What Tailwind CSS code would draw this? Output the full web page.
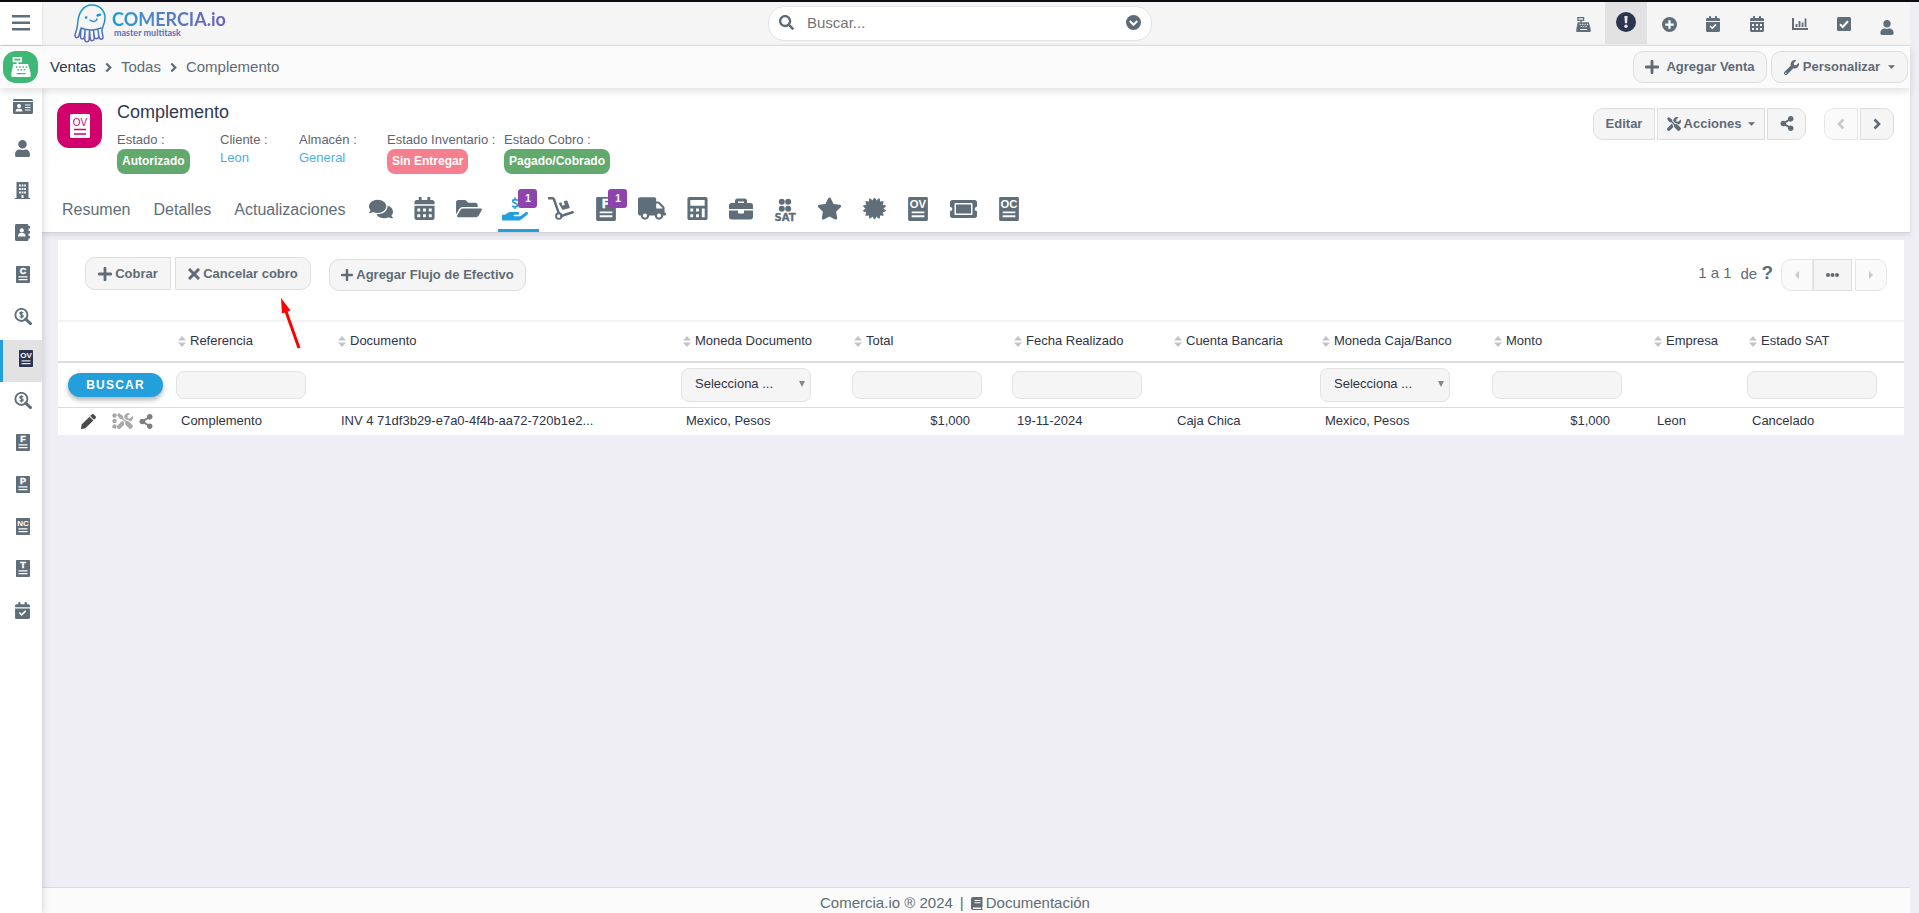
<!DOCTYPE html>
<html lang="es">
<head>
<meta charset="utf-8">
<title>Complemento - Ventas</title>
<script src="https://cdn.jsdelivr.net/npm/@tailwindcss/browser@4"></script>
</head>
<body class="bg-[#efeef4] font-['Liberation_Sans',Arial,sans-serif] text-[13px] leading-4 text-[#5f6b76]">

<svg class="hidden" aria-hidden="true">
  <symbol id="user" viewBox="0 0 448 512"><path d="M224 256c70.7 0 128-57.3 128-128S294.7 0 224 0 96 57.3 96 128s57.3 128 128 128zm89.6 32h-16.7c-22.2 10.2-46.9 16-72.9 16s-50.6-5.8-72.9-16h-16.7C60.2 288 0 348.2 0 422.4V464c0 26.5 21.5 48 48 48h352c26.5 0 48-21.5 48-48v-41.6c0-74.2-60.2-134.4-134.4-134.4z"/></symbol>
  <symbol id="search" viewBox="0 0 512 512"><path d="M505 442.7L405.3 343c-4.5-4.5-10.6-7-17-7H372c27.6-35.3 44-79.7 44-128C416 93.1 322.9 0 208 0S0 93.1 0 208s93.1 208 208 208c48.3 0 92.7-16.4 128-44v16.3c0 6.4 2.5 12.5 7 17l99.7 99.7c9.4 9.4 24.6 9.4 33.9 0l28.3-28.3c9.4-9.4 9.4-24.6.1-34zM208 336c-70.7 0-128-57.2-128-128 0-70.7 57.2-128 128-128 70.7 0 128 57.2 128 128 0 70.7-57.2 128-128 128z"/></symbol>
  <symbol id="star" viewBox="0 0 576 512"><path d="M259.3 17.8L194 150.2 47.9 171.5c-26.2 3.8-36.7 36.1-17.7 54.6l105.7 103-25 145.5c-4.5 26.3 23.2 46 46.4 33.7L288 439.6l130.7 68.7c23.2 12.2 50.9-7.4 46.4-33.7l-25-145.5 105.7-103c19-18.5 8.5-50.8-17.7-54.6L382 150.2 316.7 17.8c-11.7-23.6-45.6-23.9-57.4 0z"/></symbol>
  <symbol id="comments" viewBox="0 0 576 512"><path d="M416 192c0-88.4-93.1-160-208-160S0 103.6 0 192c0 34.3 14.1 65.9 38 92-13.4 30.2-35.5 54.2-35.8 54.5-2.2 2.3-2.8 5.7-1.5 8.7S4.8 352 8 352c36.6 0 66.9-12.3 88.7-25 32.2 15.7 70.3 25 111.3 25 114.9 0 208-71.6 208-160zm122 220c23.9-26 38-57.7 38-92 0-66.9-53.5-124.2-129.3-148.1.9 6.6 1.3 13.3 1.3 20.1 0 105.9-107.7 192-240 192-10.8 0-21.3-.8-31.7-1.9C207.8 439.6 281.8 480 368 480c41 0 79.1-9.2 111.3-25 21.8 12.7 52.1 25 88.7 25 3.2 0 6.1-1.9 7.3-4.8 1.3-2.9.7-6.3-1.5-8.7-.3-.3-22.4-24.2-35.8-54.5z"/></symbol>
  <symbol id="calendar" viewBox="0 0 448 512"><path fill-rule="evenodd" d="M0 464c0 26.500 21.500 48 48 48h352c26.500 0 48-21.500 48-48V192H0zM64 256h64v64H64zM192 256h64v64h-64zM320 256h64v64h-64zM64 384h64v64H64zM192 384h64v64h-64zM320 384h64v64h-64zM400 64h-48V16c0-8.800-7.200-16-16-16h-32c-8.800 0-16 7.200-16 16v48H160V16c0-8.800-7.200-16-16-16h-32c-8.800 0-16 7.200-16 16v48H48C21.500 64 0 85.500 0 112v48h448v-48c0-26.500-21.500-48-48-48z"/></symbol>
  <symbol id="calcheck" viewBox="0 0 448 512"><path fill-rule="evenodd" d="M0 464c0 26.500 21.500 48 48 48h352c26.500 0 48-21.500 48-48V192H0zM112 334l34-34 54 54 104-104 34 34-138 138zM400 64h-48V16c0-8.800-7.200-16-16-16h-32c-8.800 0-16 7.200-16 16v48H160V16c0-8.800-7.200-16-16-16h-32c-8.800 0-16 7.200-16 16v48H48C21.500 64 0 85.500 0 112v48h448v-48c0-26.500-21.500-48-48-48z"/></symbol>
  <symbol id="folder" viewBox="0 0 576 512"><path d="M572.7 292.100L500.300 416.200A64 64 0 0 1 445 448H45c-18.500 0-30-20-20.700-36l72.400-124.200A64 64 0 0 1 152 256h400c18.500 0 30 20 20.700 36.100zM152 224h328v-48c0-26.500-21.500-48-48-48H272l-64-64H48C21.500 64 0 85.500 0 112v278l69-118.400C86.200 242.200 118 224 152 224z"/></symbol>
  <symbol id="truck" viewBox="0 0 640 512"><path d="M624 352h-16V243.900c0-12.700-5.100-24.900-14.100-33.900L494 110.100c-9-9-21.200-14.100-33.900-14.100H416V48c0-26.500-21.500-48-48-48H48C21.500 0 0 21.500 0 48v320c0 26.500 21.500 48 48 48h16c0 53 43 96 96 96s96-43 96-96h128c0 53 43 96 96 96s96-43 96-96h48c8.800 0 16-7.200 16-16v-32c0-8.800-7.200-16-16-16zM160 464c-26.500 0-48-21.500-48-48s21.500-48 48-48 48 21.500 48 48-21.500 48-48 48zm320 0c-26.500 0-48-21.500-48-48s21.500-48 48-48 48 21.500 48 48-21.500 48-48 48zm80-208H416V144h44.100l99.900 99.900V256z"/></symbol>
  <symbol id="hand" viewBox="0 0 576 512"><path d="M565.300 328.100c-11.800-10.700-30.200-10-42.600 0L430.300 402c-11.300 9.100-25.400 14-40 14H272c-8.800 0-16-7.200-16-16s7.200-16 16-16h78.300c15.900 0 30.700-10.900 33.300-26.600 3.300-20-12.100-37.400-31.600-37.400H192c-27 0-53.100 9.300-74.100 26.300L71.400 384H16c-8.800 0-16 7.200-16 16v96c0 8.800 7.200 16 16 16h356.800c14.500 0 28.600-4.900 40-14L564 377c15.200-12.100 16.400-35.300 1.300-48.900z"/><path d="M350 68c-20-14-40-18-62-18-34 0-50 14-50 34 0 48 104 34 104 86 0 24-20 38-54 38-24 0-46-6-62-18M290 0v50M290 208v48" fill="none" stroke="currentColor" stroke-width="38"/></symbol>
  <symbol id="dolly" viewBox="0 0 576 512"><path d="M14 30h82c22 0 30 8 36 24l104 300M292 424l256-84" fill="none" stroke="currentColor" stroke-width="56" stroke-linecap="round"/><circle cx="240" cy="424" r="62" fill="none" stroke="currentColor" stroke-width="42"/><path d="M252 132l44-16 26 76 52-18-26-76 56-20c14-5 26 2 30 14l44 130c4 12-2 24-14 28L340 284c-12 4-24-2-28-14l-70-118c-2-10 0-16 10-20z"/></symbol>
  <symbol id="calc" viewBox="0 0 448 512"><path fill-rule="evenodd" d="M40 0h368c22 0 40 18 40 40v432c0 22-18 40-40 40H40c-22 0-40-18-40-40V40C0 18 18 0 40 0zM64 64v128h320V64zM64 256v64h64v-64zM192 256v64h64v-64zM64 384v64h64v-64zM192 384v64h64v-64zM320 256v192h64V256z"/></symbol>
  <symbol id="briefcase" viewBox="0 0 512 512"><path d="M320 336c0 8.800-7.200 16-16 16h-96c-8.800 0-16-7.200-16-16v-48H0v144c0 25.600 22.400 48 48 48h416c25.600 0 48-22.400 48-48V288H320v48zm144-208h-80V80c0-25.600-22.400-48-48-48H176c-25.600 0-48 22.400-48 48v48H48c-25.600 0-48 22.400-48 48v80h512v-80c0-25.600-22.400-48-48-48zm-144 0H192V96h128v32z"/></symbol>
  <symbol id="ticket" viewBox="0 0 576 512"><path d="M128 160h320v192H128V160zm400 96c0 26.500 21.500 48 48 48v96c0 26.500-21.500 48-48 48H48c-26.500 0-48-21.500-48-48v-96c26.500 0 48-21.500 48-48s-21.500-48-48-48v-96c0-26.500 21.500-48 48-48h480c26.500 0 48 21.500 48 48v96c-26.500 0-48 21.500-48 48zm-48-104c0-13.300-10.700-24-24-24H120c-13.300 0-24 10.700-24 24v208c0 13.300 10.700 24 24 24h336c13.300 0 24-10.700 24-24V152z"/></symbol>
  <symbol id="share" viewBox="0 0 448 512"><path d="M352 320c-22.600 0-43.400 7.800-59.800 20.900l-102.500-64a96.500 96.500 0 0 0 0-41.700l102.500-64C308.600 184.200 329.400 192 352 192c53 0 96-43 96-96S405 0 352 0s-96 43-96 96c0 7.200.8 14.100 2.300 20.800l-102.500 64.100C139.400 167.800 118.600 160 96 160c-53 0-96 43-96 96s43 96 96 96c22.600 0 43.400-7.800 59.800-20.900l102.500 64A96.300 96.300 0 0 0 256 416c0 53 43 96 96 96s96-43 96-96-43-96-96-96z"/></symbol>
  <symbol id="wrench" viewBox="0 0 512 512"><path d="M507.700 109.100c-2.200-9-13.500-12.100-20.100-5.500l-74.400 74.400-67.900-11.300L334 98.800l74.400-74.400c6.600-6.600 3.400-17.900-5.700-20.200-47.400-11.700-99.500.9-136.600 38-39.600 39.600-50.500 97-34 147.100L18.700 402.800c-25 25-25 65.500 0 90.500s65.500 25 90.500 0l213.200-213.200c50.100 16.700 107.500 5.700 147.400-34.200 37.100-37.100 49.700-89.400 37.900-136.800zM64 472c-13.300 0-24-10.700-24-24s10.700-24 24-24 24 10.700 24 24-10.700 24-24 24z"/></symbol>
  <symbol id="pencil" viewBox="0 0 512 512"><path d="M497.900 142.100l-46.100 46.100c-4.700 4.700-12.300 4.700-17 0l-111-111c-4.700-4.700-4.700-12.300 0-17l46.100-46.100c18.700-18.700 49.100-18.700 67.900 0l60.100 60.100c18.800 18.700 18.800 49.100 0 67.900zM284.200 99.800L21.600 362.400.4 483.900c-2.900 16.400 11.400 30.600 27.800 27.800l121.500-21.300 262.600-262.600c4.700-4.700 4.700-12.300 0-17l-111-111c-4.800-4.700-12.400-4.700-17.100 0z"/></symbol>
  <symbol id="tools" viewBox="0 0 512 512"><path d="M501.100 395.700L384 278.600c-23.100-23.100-57.600-27.600-85.400-13.900L192 158.100V96L64 0 0 64l96 128h62.100l106.600 106.600c-13.600 27.800-9.200 62.300 13.900 85.400l117.100 117.100c14.600 14.600 38.200 14.600 52.700 0l52.700-52.700c14.500-14.600 14.500-38.200 0-52.700zM331.700 225c28.300 0 54.900 11 74.900 31l19.400 19.400c15.800-6.900 30.800-16.500 43.800-29.500 37.100-37.100 49.700-89.300 37.900-136.700-2.200-9-13.500-12.100-20.100-5.500l-74.400 74.400-67.900-11.300L334 98.900l74.400-74.400c6.600-6.600 3.400-17.900-5.700-20.200-47.400-11.700-99.600.9-136.600 37.900-28.500 28.500-41.900 66.100-41.200 103.600l82.100 82.100c8.100-1.900 16.500-2.900 24.700-2.900zm-103.900 82l-56.700-56.700L18.700 402.800c-25 25-25 65.500 0 90.500s65.500 25 90.500 0l123.600-123.600c-7.600-19.900-9.900-41.600-5-62.700z"/></symbol>
  <symbol id="register" viewBox="0 0 16 16"><path fill-rule="evenodd" d="M1.300 0h7.500v4.200H6v1.300h7.700l2 7.500v2.300c0 .4-.3.700-.7.700H1c-.4 0-.7-.3-.7-.700V13l1.500-7.500h2.700V4.200H1.300zM2.700 1.400v1.400h4.700V1.400zM4 7.300v1.200h1.200V7.300zm2.600 0v1.200h1.200V7.300zm2.600 0v1.200h1.200V7.300zm2.500 0v1.200h1.200V7.300zM5.200 9.500v1.200h1.200V9.500zm2.500 0v1.200h1.200V9.500zm2.500 0v1.200h1.200V9.500zM4.500 12.800v1h7.200v-1z"/></symbol>
  <symbol id="plus" viewBox="0 0 14 14"><path d="M7 1.200v11.600M1.200 7h11.600" stroke="currentColor" stroke-width="2.800" stroke-linecap="round"/></symbol>
  <symbol id="times" viewBox="0 0 12 12"><path d="M2 2l8 8M10 2l-8 8" stroke="currentColor" stroke-width="3" stroke-linecap="square"/></symbol>
  <symbol id="chev" viewBox="0 0 8 12"><path d="M1.500 1.500L6 6l-4.500 4.500" fill="none" stroke="currentColor" stroke-width="2.600"/></symbol>
  <symbol id="sort" viewBox="0 0 8 11"><path d="M4 0l4 4.600H0zM4 11l4-4.600H0z" fill="#c3c3cb"/></symbol>
  <symbol id="moneysearch" viewBox="0 0 17 16"><circle cx="7" cy="6.500" r="5.700" fill="none" stroke="currentColor" stroke-width="1.800"/><path d="M11 10.500l4.600 4.200" stroke="currentColor" stroke-width="2.800" stroke-linecap="round"/><path d="M8.800 4.600c-1.500-.9-3.400-.6-3.300.5.1 1.400 3.200.9 3.200 2.400 0 1.300-2 1.400-3.500.5M7 3v7" fill="none" stroke="currentColor" stroke-width="1.200"/></symbol>
  <symbol id="doc" viewBox="0 0 14 17"><path fill-rule="evenodd" d="M1 0h12c.6 0 1 .4 1 1v15c0 .6-.4 1-1 1H1c-.6 0-1-.4-1-1V1c0-.6.4-1 1-1zM2.500 10.200v1.300h9v-1.300zM2.500 13v1.300h9V13z"/></symbol>
  <symbol id="cert" viewBox="0 0 24 24"><path d="M12 1l1.900 3L17 1.800l.5 3.500 3.600-.4-1.100 3.400 3.600 1-2.500 2.700 2.500 2.600-3.600 1 1.100 3.500-3.600-.4-.5 3.500-3.100-2.100-1.900 3-1.900-3L7 22.200l-.5-3.500-3.600.4L4 15.600l-3.600-1L2.900 12 .4 9.300l3.600-1-1.100-3.400 3.600.4L7 1.800 10.100 4z" stroke="currentColor"/></symbol>
</svg>

<div class="flex min-h-screen flex-col border-t-2 border-[#0d0b12] pr-[9px]">

  <!-- Barra superior -->
  <header class="flex h-11 border-b border-[#e0e0e0] bg-[#f5f5f5]">
    <button class="grid w-[42px] place-items-center bg-white pb-[2px] shadow-sm" aria-label="Menú">
      <svg class="h-4 w-[18px]" viewBox="0 0 18 16" fill="#606e7a"><path d="M0 0h18v2.500H0zM0 6.500h18V9H0zM0 13h18v2.500H0z"/></svg>
    </button>
    <div class="grid flex-1 grid-cols-[726fr_384px_758fr]">
      <a href="#" class="flex items-start gap-[5px] pt-[2px] pl-8" aria-label="Comercia.io">
        <svg class="h-[39px] w-[33px]" viewBox="0 0 33 39" fill="none" stroke="url(#lg)" stroke-width="1.500" stroke-linecap="round" stroke-linejoin="round">
          <defs><linearGradient id="lg" x1="0" y1="0" x2="0" y2="39" gradientUnits="userSpaceOnUse"><stop offset="0.200" stop-color="#139bd7"/><stop offset="1" stop-color="#6a5fb4"/></linearGradient></defs>
          <path d="M3.500 21C4 9 9 1 18 1c8 0 13 6 13 13 0 5-2.500 9-3 12-.5 3 1.500 6 1 8-.8 2-3.500 1.500-4-1l-1-7M3.500 21c-.3 5-2.700 8-2.500 11 .3 2.500 3.500 2 4-.5l1.500-6M7 24.500L6.500 33c.2 2.500 3.500 2.500 4 0l.5-8M11 25l-.3 10.500c.5 3 4 3 4.500 0l.3-9.500M15.500 26l.7 9c.8 2.500 4 2 4-.5l-.7-8.500M19.500 27l1 6.500c1 2 3.500 1.500 4-.5M7 24c6 2.500 14 2.500 20 0"/>
          <path d="M16 16c2.500 2.500 6 2 7-1"/><path d="M12 13.500h.3M23.500 11.500l2.500-.8" stroke-width="2.400"/>
        </svg>
        <span class="flex flex-col pt-[5px]">
          <span class="bg-linear-to-r from-[#139bd7] to-[#6a5fb4] bg-clip-text font-[Lato] text-[18px] leading-5 font-bold text-transparent">COMERCIA.io</span>
          <span class="pl-[2px] font-[Lato] text-[9px] leading-2 font-bold text-[#5a6fbd]">master multitask</span>
        </span>
      </a>
      <div class="mt-1 flex h-[35px] items-center rounded-2xl border border-[#e2e2e2] bg-white px-[10px] pb-[2px] text-[#5c6a77]">
        <svg class="size-[15px]" fill="currentColor"><use href="#search"/></svg>
        <input type="search" aria-label="Buscar" placeholder="Buscar..." class="ml-[13px] min-w-0 flex-1 bg-transparent text-[15px] leading-5 outline-none placeholder:text-[#757575]">
        <button aria-label="Opciones de búsqueda"><svg class="size-[15px]" viewBox="0 0 16 16"><circle cx="8" cy="8" r="8" fill="currentColor"/><path d="M4 6.500L8 10.500l4-4" fill="none" stroke="#fff" stroke-width="2.200"/></svg></button>
      </div>
      <nav class="ml-auto flex w-[348px] justify-between pr-[2px] text-[#606e7a]" aria-label="Accesos rápidos">
        <button class="grid h-[42px] w-[42px] place-items-center pt-[2px]" aria-label="Punto de venta"><svg class="size-[15px]" fill="currentColor"><use href="#register"/></svg></button>
        <button class="grid h-[42px] w-[42px] place-items-center bg-[#e2e2e2] pb-[2px] text-[#2c3550]" aria-label="Avisos"><svg class="size-5" viewBox="0 0 20 20"><circle cx="10" cy="10" r="10" fill="currentColor"/><path d="M8.400 4h3.200l-.5 7.200H8.900z" fill="#e8e8e8"/><circle cx="10" cy="14.300" r="1.700" fill="#e8e8e8"/></svg></button>
        <button class="grid h-[42px] w-[42px] place-items-center pt-[2px]" aria-label="Agregar"><svg class="size-[15px]" viewBox="0 0 16 16"><circle cx="8" cy="8" r="8" fill="currentColor"/><path d="M8 3.500v9M3.500 8h9" stroke="#fff" stroke-width="2.400"/></svg></button>
        <button class="grid h-[42px] w-[42px] place-items-center pt-[2px]" aria-label="Tareas"><svg class="h-4 w-[14px]" fill="currentColor"><use href="#calcheck"/></svg></button>
        <button class="grid h-[42px] w-[42px] place-items-center pt-[2px]" aria-label="Calendario"><svg class="h-4 w-[14px]" fill="currentColor"><use href="#calendar"/></svg></button>
        <button class="grid h-[42px] w-[42px] place-items-center pt-[2px]" aria-label="Reportes"><svg class="h-3 w-4" viewBox="0 0 16 12"><path d="M1 0v11h15" fill="none" stroke="currentColor" stroke-width="2"/><path d="M4.500 6v3M7.500 3v6M10.500 4.500V9M13.500.5V9" stroke="currentColor" stroke-width="1.800"/></svg></button>
        <button class="grid h-[42px] w-[42px] place-items-center pt-[2px]" aria-label="Pendientes"><svg class="size-[14px]" viewBox="0 0 14 14"><rect width="14" height="14" rx="1.500" fill="currentColor"/><path d="M3 7.300L5.700 10 11 4.300" fill="none" stroke="#fff" stroke-width="2"/></svg></button>
        <button class="grid h-[42px] w-[42px] place-items-center pt-2" aria-label="Usuario"><svg class="h-[15px] w-[14px]" fill="currentColor"><use href="#user"/></svg></button>
      </nav>
    </div>
  </header>

  <!-- Ruta de navegación -->
  <div class="relative z-10 flex h-[42px] items-center bg-[#fbfbfb] pr-[2px] pl-[3px] shadow-[0_3px_8px_rgba(0,0,0,0.13)]">
    <a href="#" class="grid h-8 w-[35px] place-items-center rounded-[13px] bg-[#3fb876] text-white" aria-label="Punto de venta"><svg class="size-5" fill="currentColor"><use href="#register"/></svg></a>
    <nav class="ml-3 flex items-center gap-[9px] text-[15px] leading-5" aria-label="Ruta">
      <a href="#" class="text-[#2b3445]">Ventas</a>
      <svg class="h-[11px] w-[7px]"><use href="#chev"/></svg>
      <a href="#">Todas</a>
      <svg class="h-[11px] w-[7px]"><use href="#chev"/></svg>
      <a href="#">Complemento</a>
    </nav>
    <div class="ml-auto flex gap-1 font-bold">
      <button class="flex h-8 w-[134px] items-center justify-center gap-[7px] rounded-[10px] border border-[#dedede] bg-[#f5f5f5]"><svg class="size-[14px]"><use href="#plus"/></svg>Agregar Venta</button>
      <button class="flex h-8 w-[137px] items-center justify-center gap-1 rounded-[10px] border border-[#dedede] bg-[#f5f5f5]"><svg class="size-[15px]" fill="currentColor"><use href="#wrench"/></svg>Personalizar<svg class="ml-1 h-1 w-[7px]" viewBox="0 0 8 4" fill="currentColor"><path d="M0 0h8L4 4z"/></svg></button>
    </div>
  </div>

  <div class="flex flex-1">
    <!-- Menú lateral -->
    <nav class="z-[1] w-[42px] bg-white text-[#606e7a] shadow-[2px_0_6px_rgba(0,0,0,0.12)]" aria-label="Módulos">
      <a href="#" aria-label="Prospectos" class="grid h-[42px] place-items-center pb-[6px] pl-[3px]"><svg class="h-[15px] w-5" viewBox="0 0 20 15"><path fill="currentColor" fill-rule="evenodd" d="M1.500 0h17c.8 0 1.500.7 1.500 1.500V2H0v-.5C0 .7.700 0 1.500 0zM0 3h20v10.500c0 .8-.7 1.500-1.500 1.500h-17C.7 15 0 14.300 0 13.500zM6 5a2 2 0 1 0 0 4 2 2 0 0 0 0-4zM2.500 12.500h7c0-1.500-1-2.800-2.300-2.800H4.800c-1.300 0-2.300 1.300-2.300 2.800zM12 5.500v1h5.500v-1zM12 8v1h5.500V8zM12 10.500v1h5.500v-1z"/></svg></a>
      <a href="#" aria-label="Clientes" class="grid h-[42px] place-items-center pb-[6px] pl-[3px]"><svg class="h-[17px] w-[15px]" fill="currentColor"><use href="#user"/></svg></a>
      <a href="#" aria-label="Empresas" class="grid h-[42px] place-items-center pb-[6px] pl-[3px]"><svg class="h-[17px] w-[15px]" viewBox="0 0 15 17"><path fill="currentColor" fill-rule="evenodd" d="M1.500 0h12v16H15v1H0v-1h1.500zM4 2.500v2h1.800v-2zm2.600 0v2h1.800v-2zm2.600 0v2H11v-2zM4 6v2h1.800V6zm2.600 0v2h1.800V6zm2.600 0v2H11V6zM4 9.500v2h1.800v-2zm2.600 0v2h1.800v-2zm2.600 0v2H11v-2zM6.500 13v3h2v-3z"/></svg></a>
      <a href="#" aria-label="Contactos" class="grid h-[42px] place-items-center pb-[6px] pl-[3px]"><svg class="h-[17px] w-[15px]" viewBox="0 0 15 17"><path fill="currentColor" fill-rule="evenodd" d="M1.500 0h10.500c.8 0 1.500.7 1.500 1.500V2H15v2.500h-1.500V7H15v2.500h-1.500V12H15v2.500h-1.500v1c0 .8-.7 1.500-1.500 1.500H1.500C.7 17 0 16.300 0 15.500v-14C0 .7.700 0 1.500 0zM6.800 4.300a2.100 2.100 0 1 0 0 4.200 2.100 2.100 0 0 0 0-4.200zM3 12.500h7.600c0-2-1.100-3.500-2.600-3.500H5.600C4.100 9 3 10.500 3 12.500z"/></svg></a>
      <a href="#" aria-label="Cotizaciones" class="grid h-[42px] place-items-center pb-[6px] pl-[3px]"><svg class="h-[17px] w-[14px]" viewBox="0 0 14 17"><use href="#doc" fill="currentColor"/><text x="7" y="8" text-anchor="middle" fill="#fff" stroke="#fff" stroke-width=".4" font-size="9" font-weight="700">C</text></svg></a>
      <a href="#" aria-label="Buscar cotización" class="grid h-[42px] place-items-center pb-[6px] pl-[3px]"><svg class="h-[17px] w-[18px]"><use href="#moneysearch"/></svg></a>
      <a href="#" aria-label="Órdenes de venta" aria-current="page" class="grid h-[42px] place-items-center border-l-[3px] border-[#23a0dc] bg-[#e2e2e2] pb-[6px] pl-[6px] text-[#2c3550]"><svg class="h-[17px] w-[14px]" viewBox="0 0 14 17"><use href="#doc" fill="currentColor"/><text x="7" y="8" text-anchor="middle" fill="#fff" font-size="8" font-weight="700">OV</text></svg></a>
      <a href="#" aria-label="Buscar venta" class="grid h-[42px] place-items-center pb-[6px] pl-[3px]"><svg class="h-[17px] w-[18px]"><use href="#moneysearch"/></svg></a>
      <a href="#" aria-label="Facturas" class="grid h-[42px] place-items-center pb-[6px] pl-[3px]"><svg class="h-[17px] w-[14px]" viewBox="0 0 14 17"><use href="#doc" fill="currentColor"/><text x="7" y="8" text-anchor="middle" fill="#fff" stroke="#fff" stroke-width=".4" font-size="9" font-weight="700">F</text></svg></a>
      <a href="#" aria-label="Pagos" class="grid h-[42px] place-items-center pb-[6px] pl-[3px]"><svg class="h-[17px] w-[14px]" viewBox="0 0 14 17"><use href="#doc" fill="currentColor"/><text x="7" y="8" text-anchor="middle" fill="#fff" stroke="#fff" stroke-width=".4" font-size="9" font-weight="700">P</text></svg></a>
      <a href="#" aria-label="Notas de crédito" class="grid h-[42px] place-items-center pb-[6px] pl-[3px]"><svg class="h-[17px] w-[14px]" viewBox="0 0 14 17"><use href="#doc" fill="currentColor"/><text x="7" y="8" text-anchor="middle" fill="#fff" font-size="8" font-weight="700">NC</text></svg></a>
      <a href="#" aria-label="Traslados" class="grid h-[42px] place-items-center pb-[6px] pl-[3px]"><svg class="h-[17px] w-[14px]" viewBox="0 0 14 17"><use href="#doc" fill="currentColor"/><text x="7" y="8" text-anchor="middle" fill="#fff" stroke="#fff" stroke-width=".4" font-size="9" font-weight="700">T</text></svg></a>
      <a href="#" aria-label="Actividades" class="grid h-[42px] place-items-center pb-[6px] pl-[3px]"><svg class="h-[17px] w-[15px]" fill="currentColor"><use href="#calcheck"/></svg></a>
    </nav>

    <div class="flex min-w-0 flex-1 flex-col">
      <!-- Encabezado del registro -->
      <section class="border-b border-[#d4d4da] bg-white shadow-[0_2px_5px_rgba(0,0,0,0.1)]">
        <div class="flex h-[97px] items-start pt-[15px] pr-4 pl-[15px]">
          <div class="grid size-[45px] place-items-center rounded-xl bg-[#d1006c]"><svg class="h-6 w-5" viewBox="0 0 20 24"><rect width="20" height="24" rx="1.500" fill="#fff"/><text x="10" y="11.500" text-anchor="middle" fill="#d1006c" font-size="10">OV</text><path d="M4 15.500h12M4 20h12" stroke="#d1006c" stroke-width="1.500"/></svg></div>
          <div class="ml-[15px]">
            <h1 class="text-[18px] leading-[18px] text-[#2f3a52]">Complemento</h1>
            <dl class="mt-[11px] grid grid-cols-[103px_79px_88px_117px_auto] text-[#5f6470]">
              <div><dt>Estado :</dt><dd class="mt-px inline-block rounded-lg bg-[#61a96c] px-[5px] py-[4px] text-[12px] leading-[17px] font-bold text-white">Autorizado</dd></div>
              <div><dt>Cliente :</dt><dd><a href="#" class="mt-[2px] block text-[#4bafde]">Leon</a></dd></div>
              <div><dt>Almacén :</dt><dd><a href="#" class="mt-[2px] block text-[#4bafde]">General</a></dd></div>
              <div><dt>Estado Inventario :</dt><dd class="mt-px inline-block rounded-lg bg-[#f57f8e] px-[5px] py-[4px] text-[12px] leading-[17px] font-bold text-white">Sin Entregar</dd></div>
              <div><dt>Estado Cobro :</dt><dd class="mt-px inline-block rounded-lg bg-[#61a96c] px-[5px] py-[4px] text-[12px] leading-[17px] font-bold text-white">Pagado/Cobrado</dd></div>
            </dl>
          </div>
          <div class="mt-[5px] ml-auto flex gap-[2px] font-bold">
            <button class="h-8 w-[62px] rounded-l-[10px] border border-[#dedede] bg-[#f5f5f5]">Editar</button>
            <button class="flex h-8 w-[108px] items-center justify-center gap-[3px] border border-[#dedede] bg-[#f5f5f5]"><svg class="size-[14px]" fill="currentColor"><use href="#tools"/></svg>Acciones<svg class="ml-1 h-1 w-[7px]" viewBox="0 0 8 4" fill="currentColor"><path d="M0 0h8L4 4z"/></svg></button>
            <button class="grid h-8 w-[39px] place-items-center rounded-r-[10px] border border-[#dedede] bg-[#f5f5f5] pb-[2px]" aria-label="Compartir"><svg class="h-[15px] w-[14px]" fill="currentColor"><use href="#share"/></svg></button>
            <button disabled class="ml-4 grid h-8 w-[34px] place-items-center rounded-l-[10px] border border-[#e6e6e6] bg-[#fafafa] text-[#c5cacf]" aria-label="Anterior"><svg class="h-3 w-2 rotate-180"><use href="#chev"/></svg></button>
            <button class="grid h-8 w-[34px] place-items-center rounded-r-[10px] border border-[#dedede] bg-[#f5f5f5]" aria-label="Siguiente"><svg class="h-3 w-2"><use href="#chev"/></svg></button>
          </div>
        </div>
        <nav class="flex h-[47px] gap-px pl-[9px] text-[16px] leading-5 text-[#606e7a]" aria-label="Secciones">
          <a href="#" class="flex items-center px-[11px] pt-[2px]">Resumen</a>
          <a href="#" class="flex items-center px-[11px] pt-[2px]">Detalles</a>
          <a href="#" class="flex items-center px-[11px] pt-[2px]">Actualizaciones</a>
          <a href="#" aria-label="Comentarios" class="ml-[2px] flex items-center px-[10px] pt-px"><svg class="h-[22px] w-[24px]" fill="currentColor"><use href="#comments"/></svg></a>
          <a href="#" aria-label="Calendario" class="flex items-center px-[10px]"><svg class="h-[23px] w-[21px]" fill="currentColor"><use href="#calendar"/></svg></a>
          <a href="#" aria-label="Documentos" class="flex items-center px-[10px]"><svg class="h-[23px] w-[26px]" fill="currentColor"><use href="#folder"/></svg></a>
          <a href="#" aria-label="Cobros" aria-current="page" class="relative flex items-center px-[9px] text-[#23a0dc]"><svg class="h-[24px] w-[26px]" fill="currentColor"><use href="#hand"/></svg><span class="absolute top-1 right-0 grid size-[19px] place-items-center rounded-[3px] bg-[#8e44ad] text-[10px] leading-3 font-bold text-white">1</span><span class="absolute -right-[2px] bottom-0 left-[5px] h-[3px] bg-[#23a0dc]"></span></a>
          <a href="#" aria-label="Entregas" class="flex items-center px-[10px]"><svg class="h-[23px] w-[26px]" fill="currentColor"><use href="#dolly"/></svg></a>
          <a href="#" aria-label="Facturas" class="relative flex items-center px-[10px] pt-px"><svg class="h-[24px] w-[22px]" viewBox="0 0 14 17"><use href="#doc" fill="currentColor"/><text x="7" y="8" text-anchor="middle" fill="#fff" stroke="#fff" stroke-width=".4" font-size="9" font-weight="700">F</text></svg><span class="absolute top-1 right-0 grid size-[19px] place-items-center rounded-[3px] bg-[#8e44ad] text-[10px] leading-3 font-bold text-white">1</span></a>
          <a href="#" aria-label="Envíos" class="flex items-center px-[10px]"><svg class="h-[23px] w-[28px]" fill="currentColor"><use href="#truck"/></svg></a>
          <a href="#" aria-label="Contabilidad" class="flex items-center px-[10px]"><svg class="h-[23px] w-[21px]" fill="currentColor"><use href="#calc"/></svg></a>
          <a href="#" aria-label="Proyectos" class="flex items-center px-[10px]"><svg class="size-[24px]" fill="currentColor"><use href="#briefcase"/></svg></a>
          <a href="#" aria-label="SAT" class="flex items-center px-[9px] pt-[3px]"><svg class="h-[24px] w-[24px]" viewBox="0 0 24 24" fill="currentColor"><circle cx="8.800" cy="3.800" r="3"/><circle cx="15.200" cy="3.800" r="3"/><circle cx="8.800" cy="10.800" r="3"/><circle cx="15.200" cy="10.800" r="3"/><text x="12" y="23" text-anchor="middle" font-family="DejaVu Sans" font-size="10" font-weight="700" stroke="currentColor" stroke-width=".3">SAT</text></svg></a>
          <a href="#" aria-label="Favoritos" class="flex items-center px-[10px]"><svg class="h-[23px] w-[25px]" fill="currentColor"><use href="#star"/></svg></a>
          <a href="#" aria-label="Certificados" class="flex items-center px-[10px]"><svg class="h-[23px] w-[23px]" fill="currentColor"><use href="#cert"/></svg></a>
          <a href="#" aria-label="Órdenes de venta" class="flex items-center px-[10px] pt-px"><svg class="h-[24px] w-[22px]" viewBox="0 0 14 17"><use href="#doc" fill="currentColor"/><text x="7" y="8" text-anchor="middle" fill="#fff" font-size="8" font-weight="700">OV</text></svg></a>
          <a href="#" aria-label="Boletos" class="flex items-center px-[10px]"><svg class="h-[24px] w-[27px]" fill="currentColor"><use href="#ticket"/></svg></a>
          <a href="#" aria-label="Órdenes de compra" class="flex items-center px-[10px] pt-px"><svg class="h-[24px] w-[22px]" viewBox="0 0 14 17"><use href="#doc" fill="currentColor"/><text x="7" y="8" text-anchor="middle" fill="#fff" font-size="8" font-weight="700">OC</text></svg></a>
        </nav>
      </section>

      <!-- Lista de cobros -->
      <main class="mt-[7px] mr-[6px] ml-4 flex-1">
        <div class="relative bg-white">
          <div class="flex h-20 items-start pt-[17px] pr-[17px] pl-[27px] font-bold">
            <button class="flex h-[33px] w-[86px] items-center justify-center gap-[3px] rounded-l-[10px] border border-[#dedede] bg-[#f5f5f5]"><svg class="size-[14px]"><use href="#plus"/></svg>Cobrar</button>
            <button class="ml-1 flex h-[33px] w-[136px] items-center justify-center gap-[3px] rounded-r-[10px] border border-[#dedede] bg-[#f5f5f5]"><svg class="size-3"><use href="#times"/></svg>Cancelar cobro</button>
            <button class="mt-[2px] ml-[18px] flex h-8 w-[197px] items-center justify-center gap-[3px] rounded-[10px] border border-[#dedede] bg-[#f5f5f5]"><svg class="size-3"><use href="#plus"/></svg>Agregar Flujo de Efectivo</button>
            <div class="mt-[6px] ml-auto flex gap-[9px] text-[15px] leading-5 font-normal"><span>1 a 1</span><span>de <b class="text-[19px]">?</b></span></div>
            <div class="mt-[2px] ml-2 flex">
              <button disabled class="grid h-8 w-8 place-items-center rounded-l-[10px] border border-[#e6e6e6] bg-[#fafafa]" aria-label="Página anterior"><svg class="h-2 w-1" viewBox="0 0 4 8" fill="#c5cacf"><path d="M4 0v8L0 4z"/></svg></button>
              <button class="grid h-8 w-[39px] place-items-center border border-[#dedede] bg-[#f5f5f5]" aria-label="Ir a página"><svg class="h-1 w-[13px]" viewBox="0 0 13 4" fill="currentColor"><circle cx="2" cy="2" r="2"/><circle cx="6.500" cy="2" r="2"/><circle cx="11" cy="2" r="2"/></svg></button>
              <button disabled class="ml-[3px] grid h-8 w-8 place-items-center rounded-r-[10px] border border-[#e6e6e6] bg-[#fafafa]" aria-label="Página siguiente"><svg class="h-2 w-1" viewBox="0 0 4 8" fill="#c5cacf"><path d="M0 0v8l4-4z"/></svg></button>
            </div>
          </div>

          <table class="w-full table-fixed border-collapse text-left text-[#2f3347]">
            <colgroup><col class="w-[118px]"><col class="w-[160px]"><col><col class="w-[171px]"><col class="w-[160px]"><col class="w-[160px]"><col class="w-[148px]"><col class="w-[172px]"><col class="w-[160px]"><col class="w-[95px]"><col class="w-[157px]"></colgroup>
            <thead>
              <tr class="h-[41px] border-t-2 border-b-2 border-t-[#f3f3f3] border-b-[#dcdcdc]">
                <td></td>
                <th class="pb-px pl-[2px] font-normal"><span class="flex items-center gap-1"><svg class="h-[11px] w-2"><use href="#sort"/></svg>Referencia</span></th>
                <th class="pb-px pl-[2px] font-normal"><span class="flex items-center gap-1"><svg class="h-[11px] w-2"><use href="#sort"/></svg>Documento</span></th>
                <th class="pb-px pl-[2px] font-normal"><span class="flex items-center gap-1"><svg class="h-[11px] w-2"><use href="#sort"/></svg>Moneda Documento</span></th>
                <th class="pb-px pl-[2px] font-normal"><span class="flex items-center gap-1"><svg class="h-[11px] w-2"><use href="#sort"/></svg>Total</span></th>
                <th class="pb-px pl-[2px] font-normal"><span class="flex items-center gap-1"><svg class="h-[11px] w-2"><use href="#sort"/></svg>Fecha Realizado</span></th>
                <th class="pb-px pl-[2px] font-normal"><span class="flex items-center gap-1"><svg class="h-[11px] w-2"><use href="#sort"/></svg>Cuenta Bancaria</span></th>
                <th class="pb-px pl-[2px] font-normal"><span class="flex items-center gap-1"><svg class="h-[11px] w-2"><use href="#sort"/></svg>Moneda Caja/Banco</span></th>
                <th class="pb-px pl-[2px] font-normal"><span class="flex items-center gap-1"><svg class="h-[11px] w-2"><use href="#sort"/></svg>Monto</span></th>
                <th class="pb-px pl-[2px] font-normal"><span class="flex items-center gap-1"><svg class="h-[11px] w-2"><use href="#sort"/></svg>Empresa</span></th>
                <th class="pb-px pl-[2px] font-normal"><span class="flex items-center gap-1"><svg class="h-[11px] w-2"><use href="#sort"/></svg>Estado SAT</span></th>
              </tr>
            </thead>
            <tbody>
              <tr class="h-[45px] border-b border-[#dcdcdc]">
                <td class="pl-[10px]"><button class="block h-6 w-[95px] rounded-full bg-[#23a0dc] text-[12px] leading-4 font-bold tracking-widest text-white shadow-[0_3px_5px_rgba(0,0,0,0.3)]">BUSCAR</button></td>
                <td><input aria-label="Referencia" class="block h-7 w-[130px] rounded-lg border border-[#e3e3e3] bg-[#f5f5f5] px-2"></td>
                <td></td>
                <td><span class="relative block w-[130px]"><select aria-label="Moneda Documento" class="block h-[34px] w-full appearance-none rounded-lg border border-[#e3e3e3] bg-[#f5f5f5] pb-[2px] pl-[13px]"><option>Selecciona ...</option></select><svg class="pointer-events-none absolute top-[13px] right-[6px] h-[6px] w-[6px]" viewBox="0 0 6 6" fill="#888"><path d="M0 0h6L3 6z"/></svg></span></td>
                <td><input aria-label="Total" class="block h-7 w-[130px] rounded-lg border border-[#e3e3e3] bg-[#f5f5f5] px-2"></td>
                <td><input aria-label="Fecha Realizado" class="block h-7 w-[130px] rounded-lg border border-[#e3e3e3] bg-[#f5f5f5] px-2"></td>
                <td></td>
                <td><span class="relative block w-[130px]"><select aria-label="Moneda Caja/Banco" class="block h-[34px] w-full appearance-none rounded-lg border border-[#e3e3e3] bg-[#f5f5f5] pb-[2px] pl-[13px]"><option>Selecciona ...</option></select><svg class="pointer-events-none absolute top-[13px] right-[6px] h-[6px] w-[6px]" viewBox="0 0 6 6" fill="#888"><path d="M0 0h6L3 6z"/></svg></span></td>
                <td><input aria-label="Monto" class="block h-7 w-[130px] rounded-lg border border-[#e3e3e3] bg-[#f5f5f5] px-2"></td>
                <td></td>
                <td><input aria-label="Estado SAT" class="block h-7 w-[130px] rounded-lg border border-[#e3e3e3] bg-[#f5f5f5] px-2"></td>
              </tr>
              <tr class="h-7">
                <td class="pl-[23px]"><span class="flex items-center">
                  <button aria-label="Editar" class="text-[#4a4a4a]"><svg class="size-[15px]" fill="currentColor"><use href="#pencil"/></svg></button>
                  <button aria-label="Acciones" class="ml-4 flex items-center text-[#a9a9a9]"><svg class="h-4 w-[5px]" viewBox="0 0 5 16" fill="currentColor"><circle cx="2.500" cy="2.500" r="2.200"/><circle cx="2.500" cy="8" r="2.200"/><circle cx="2.500" cy="13.500" r="2.200"/></svg><svg class="size-4" fill="currentColor"><use href="#tools"/></svg></button>
                  <button aria-label="Compartir" class="ml-[6px] text-[#7d7d7d]"><svg class="h-[15px] w-[14px]" fill="currentColor"><use href="#share"/></svg></button></span></td>
                <td class="pl-[5px]">Complemento</td>
                <td class="pl-[5px]">INV 4 71df3b29-e7a0-4f4b-aa72-720b1e2...</td>
                <td class="pl-[5px]">Mexico, Pesos</td>
                <td class="pr-[42px] text-right">$1,000</td>
                <td class="pl-[5px]">19-11-2024</td>
                <td class="pl-[5px]">Caja Chica</td>
                <td class="pl-[5px]">Mexico, Pesos</td>
                <td class="pr-[42px] text-right">$1,000</td>
                <td class="pl-[5px]">Leon</td>
                <td class="pl-[5px]">Cancelado</td>
              </tr>
            </tbody>
          </table>

          <!-- Flecha de anotación -->
          <svg class="pointer-events-none absolute top-[58px] left-[223px] h-[52px] w-5" viewBox="0 0 20 52"><path d="M4.500 12L18 50" stroke="#f00" stroke-width="3"/><path d="M0 0l9.500 12.500L1 15.500z" fill="#f00"/></svg>
        </div>
      </main>

      <footer class="flex h-[26px] items-center justify-center gap-[7px] border-t border-[#dcdce0] bg-[#fbfbfb] pt-[5px] pr-[42px] text-[15px] leading-5">
        <span>Comercia.io ® 2024</span><span>|</span>
        <a href="#" class="flex items-center gap-[3px]"><svg class="h-[13px] w-3" viewBox="0 0 12 13"><path fill="currentColor" fill-rule="evenodd" d="M2 0h9.500v10.500H11V12h.5v1H2a2 2 0 0 1-2-2V2a2 2 0 0 1 2-2zM3.500 3v1h6V3zM3.500 5.200v1h6v-1zM2 10.500V12h8v-1.500z"/></svg>Documentación</a>
      </footer>
    </div>
  </div>
</div>
</body>
</html>
